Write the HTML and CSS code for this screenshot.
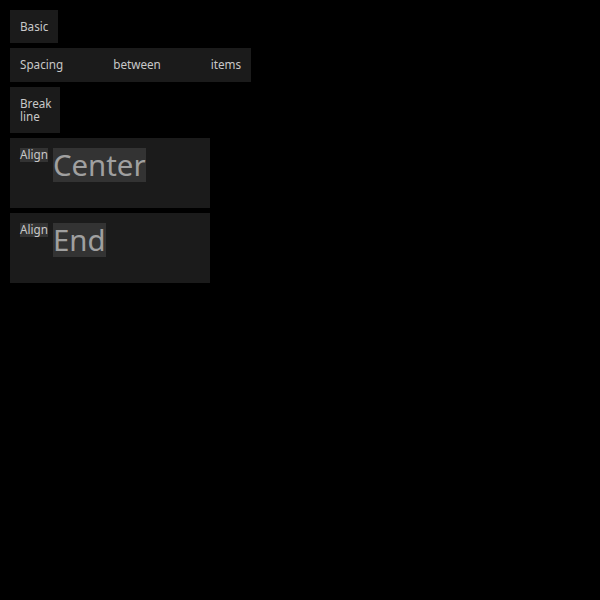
FILE: index.html
```html
<!DOCTYPE html>
<html>
<head>
<meta charset="utf-8">
<link rel="stylesheet" href="styles.css">
</head>
<body>
<div class="stack">
  <div class="box basic">Basic</div>
  <div class="box spacing"><span>Spacing</span><span>between</span><span>items</span></div>
  <div class="box wrap">Break line</div>
  <div class="box align"><span class="tag">Align</span><span class="big">Center</span></div>
  <div class="box align"><span class="tag">Align</span><span class="big">End</span></div>
</div>
</body>
</html>
```
FILE: styles.css
```css
html, body {
  margin: 0;
  background: #000;
}
body {
  padding: 10px;
  font-family: "Noto Sans", "Open Sans", sans-serif;
  font-size: 11.7px;
  line-height: 13.33px;
  color: #c8c8c8;
}
.stack {
  display: flex;
  flex-direction: column;
  align-items: flex-start;
  gap: 5px;
}
.box {
  background: #1b1b1b;
  padding: 10px;
}
.spacing {
  display: flex;
  gap: 50px;
}
.wrap {
  width: 30px;
}
.align {
  width: 180px;
  height: 50px;
  display: flex;
  align-items: flex-start;
  gap: 5px;
}
.tag {
  background: #333;
}
.big {
  background: #333;
  font-size: 29.4px;
  line-height: 34px;
  color: #a0a0a0;
}
```
